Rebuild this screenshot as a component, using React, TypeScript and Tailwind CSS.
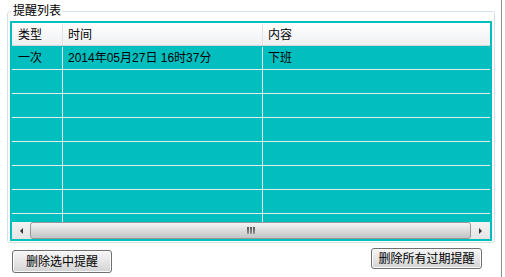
import React from 'react';

interface Reminder {
  type: string;
  time: string;
  content: string;
}

const REMINDERS: Reminder[] = [
  { type: '一次', time: '2014年05月27日 16时37分', content: '下班' },
];

const EMPTY_ROWS = 7;

const FONT = "font-['Liberation_Sans','Noto_Sans_CJK_SC',sans-serif]";

const WinButton: React.FC<{ label: string; className?: string }> = ({ label, className }) => (
  <button
    className={`flex items-center justify-center rounded-[3px] border border-[#707070] bg-gradient-to-b from-[#f6f6f6] via-[#e6e6e6] to-[#d2d2d2] text-[12px] leading-none text-black shadow-[inset_0_0_0_1px_#fbfbfb] ${className ?? ''}`}
  >
    {label}
  </button>
);

const ScrollBar: React.FC = () => (
  <div className="flex h-[17px] shrink-0 items-stretch bg-gradient-to-b from-[#f3f3f3] to-[#e4e4e4]">
    {/* left arrow */}
    <div className="flex w-[18px] items-center justify-center">
      <div className="h-0 w-0 border-y-[3px] border-r-[3px] border-y-transparent border-r-[#333]" />
    </div>
    {/* thumb */}
    <div className="flex flex-1 items-center justify-center rounded-[3px] border border-[#979797] bg-gradient-to-b from-[#f4f4f4] via-[#dcdcdc] to-[#c4c4c4]">
      <div className="flex gap-[1px]">
        <div className="h-[7px] w-[2px] bg-gradient-to-b from-[#555] to-[#999]" />
        <div className="h-[7px] w-[2px] bg-gradient-to-b from-[#555] to-[#999]" />
        <div className="h-[7px] w-[2px] bg-gradient-to-b from-[#555] to-[#999]" />
      </div>
    </div>
    {/* right arrow */}
    <div className="flex w-[19px] items-center justify-center">
      <div className="h-0 w-0 border-y-[3px] border-l-[3px] border-y-transparent border-l-[#333]" />
    </div>
  </div>
);

const ReminderTable: React.FC = () => (
  <div className="flex h-[220px] w-[482px] flex-col border-2 border-[#01bfbf] bg-[#01bfbf]">
    {/* header */}
    <div className="flex h-[23px] shrink-0 border-b border-[#d5d5d5] bg-gradient-to-b from-white to-[#eff0f3] pt-[1px] text-[12px] leading-[22px] text-black">
      <div className="w-[51px] border-r border-[#e4e4e4] pl-[6px]">类型</div>
      <div className="w-[200px] border-r border-[#e4e4e4] pl-[5px]">时间</div>
      <div className="flex-1 pl-[5px]">内容</div>
    </div>

    {/* rows */}
    <div className="flex-1 overflow-hidden">
      {REMINDERS.map((r, i) => (
        <div key={i} className="flex h-[24px] border-b border-[#e8eeee] pt-[1px] text-[12px] leading-[22px] text-black">
          <div className="w-[51px] border-r border-[#e8eeee] pl-[6px]">{r.type}</div>
          <div className="w-[200px] border-r border-[#e8eeee] pl-[5px]">{r.time}</div>
          <div className="flex-1 pl-[5px]">{r.content}</div>
        </div>
      ))}
      {Array.from({ length: EMPTY_ROWS + 1 }).map((_, i) => (
        <div key={`e${i}`} className="flex h-[24px] border-b border-[#e8eeee]">
          <div className="w-[51px] border-r border-[#e8eeee]" />
          <div className="w-[200px] border-r border-[#e8eeee]" />
          <div className="flex-1" />
        </div>
      ))}
    </div>

    <ScrollBar />
  </div>
);

export default function App() {
  return (
    <div className={`flex h-[277px] w-[505px] bg-white ${FONT}`}>
      <div className="w-[501px] pl-[7px] pt-[11px]">
        {/* group box */}
        <div className="relative h-[232px] w-[488px] rounded-[3px] border border-[#d5dfe5] px-[2px] pt-[9px]">
          <span className="absolute left-[3px] top-[-8px] bg-white px-[2px] text-[12px] leading-[14px] text-black">
            提醒列表
          </span>
          <ReminderTable />
        </div>

        {/* actions */}
        <div className="flex w-[488px] items-start justify-between pl-[5px] pr-[13px] pt-[5px]">
          <WinButton label="删除选中提醒" className="mt-[2px] h-[23px] w-[100px]" />
          <WinButton label="删除所有过期提醒" className="h-[21px] w-[111px]" />
        </div>
      </div>
      <div className="w-px bg-[#8e8e8e]" />
    </div>
  );
}
